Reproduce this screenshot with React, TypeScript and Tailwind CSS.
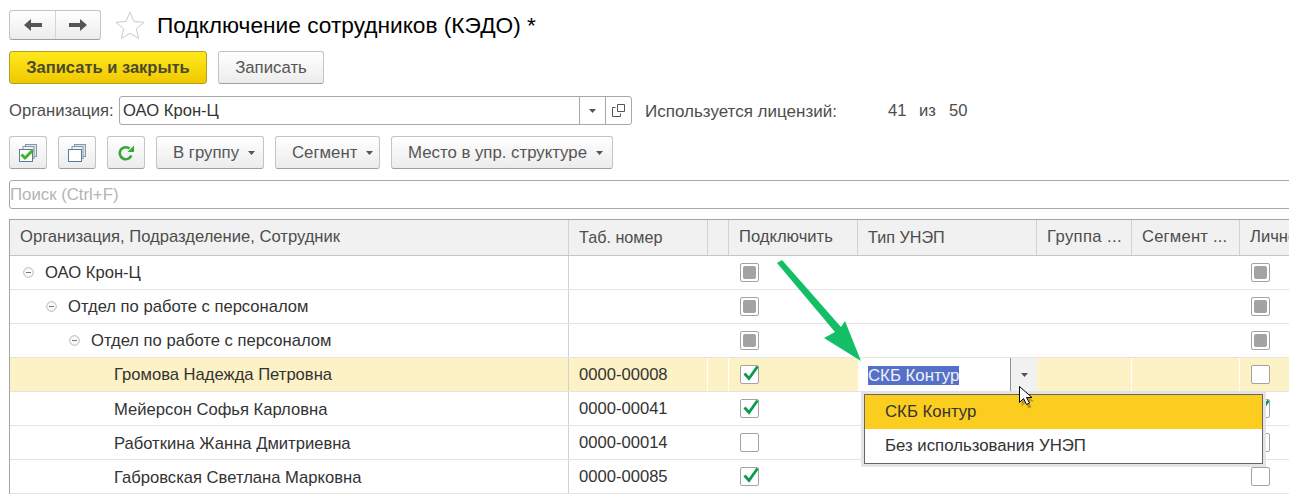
import React from "react";

type CheckState = "none" | "checked" | "mixed";

interface Row {
    name: string;
    indent: number;
    tab?: string;
    connect: CheckState;
    personal: CheckState;
    group?: boolean;
    active?: boolean;
}

const rows: Row[] = [
    { name: "ОАО Крон-Ц", indent: 35, connect: "mixed", personal: "mixed", group: true },
    { name: "Отдел по работе с персоналом", indent: 58, connect: "mixed", personal: "mixed", group: true },
    { name: "Отдел по работе с персоналом", indent: 81, connect: "mixed", personal: "mixed", group: true },
    { name: "Громова Надежда Петровна", indent: 104, tab: "0000-00008", connect: "checked", personal: "none", active: true },
    { name: "Мейерсон Софья Карловна", indent: 104, tab: "0000-00041", connect: "checked", personal: "checked" },
    { name: "Работкина Жанна Дмитриевна", indent: 104, tab: "0000-00014", connect: "none", personal: "none" },
    { name: "Габровская Светлана Марковна", indent: 104, tab: "0000-00085", connect: "checked", personal: "none" },
];

const Caret = () => (
    <svg width="7" height="4" viewBox="0 0 7 4" className="shrink-0">
        <path d="M0 0h7L3.5 4z" fill="#555" />
    </svg>
);

const Check = ({ state }: { state: CheckState }) => (
    <div className="relative h-[19px] w-[19px] rounded-[2px] border border-[#a3a3a3] bg-white p-[2px]">
        {state === "mixed" && <div className="h-full w-full rounded-[2px] bg-[#a3a3a3]" />}
        {state === "checked" && (
            <svg width="20" height="20" viewBox="0 0 20 20" className="absolute top-[-3px] left-0">
                <path d="M3.5 10.5l4.5 5L16.5 3.5" fill="none" stroke="#0a9a50" strokeWidth="2.8" />
            </svg>
        )}
    </div>
);

const Collapse = () => (
    <svg width="11" height="11" viewBox="0 0 11 11" className="shrink-0">
        <circle cx="5.5" cy="5.5" r="4.8" fill="#fafafa" stroke="#b5b5b5" />
        <path d="M3 5.5h5" stroke="#777" />
    </svg>
);

const ToolButton = ({ children, className }: { children: React.ReactNode; className: string }) => (
    <div
        className={`flex h-[33px] items-center rounded-[3px] border border-[#c4c4c4] border-b-[#9f9f9f] bg-gradient-to-b from-white to-[#ececec] text-[16.8px] text-[#555] ${className}`}
    >
        {children}
    </div>
);

const MenuButton = ({ label, width }: { label: string; width: string }) => (
    <ToolButton className={`gap-[9px] pl-[16px] ${width}`}>
        <span>{label}</span>
        <Caret />
    </ToolButton>
);

const StackIcon = ({ checked }: { checked?: boolean }) => (
    <svg width="18" height="18" viewBox="0 0 18 18">
        <rect x="6.5" y="0.5" width="11" height="12" fill="#dfe5ea" stroke="#8397a8" />
        <rect x="4" y="2.500" width="11" height="12" fill="#eef1f4" stroke="#8397a8" />
        <rect x="0.5" y="5.500" width="13" height="12" fill="white" stroke="#5d7a92" />
        {checked && <path d="M2.500 10.500l3.500 3.500L14 6" fill="none" stroke="#3fb52c" strokeWidth="3" />}
    </svg>
);

const RefreshIcon = () => (
    <svg width="18" height="18" viewBox="0 0 18 18">
        <path d="M14.3 11.5A6 6 0 1 1 12.6 4.6" fill="none" stroke="#36a83a" strokeWidth="2.6" />
        <path d="M10.5 8h6.5V1.5z" fill="#36a83a" />
    </svg>
);

const App = () => {
    return (
        <div
            className="relative h-[496px] w-[1289px] overflow-hidden bg-white pt-[10px] pl-[9px] text-[16.6px] text-[#333]"
            style={{ fontFamily: '"Liberation Sans", Arial, sans-serif' }}
        >
            <div className="flex h-[30px] items-center">
                <div className="flex h-[30px] w-[92px] rounded-[3px] border border-[#c4c4c4] border-b-[#9f9f9f] bg-gradient-to-b from-white to-[#ececec]">
                    <div className="flex w-[46px] items-center justify-center border-r border-[#d4d4d4]">
                        <svg width="18" height="12" viewBox="0 0 18 12">
                            <path d="M0 6l7-6v4h11v4H7v4z" fill="#555" />
                        </svg>
                    </div>
                    <div className="flex flex-1 items-center justify-center">
                        <svg width="18" height="12" viewBox="0 0 18 12">
                            <path d="M18 6l-7-6v4H0v4h11v4z" fill="#555" />
                        </svg>
                    </div>
                </div>
                <svg width="30" height="28" viewBox="0 0 30 28" className="ml-[14px]">
                    <path d="M15 1l4 9.5 10 .8-7.700 6.500 2.400 9.700L15 22.300 6.300 27.500l2.400-9.700L1 11.300l10-.8z" fill="white" stroke="#c3ccd4" />
                </svg>
                <h1 className="ml-[12px] text-[22.7px] leading-none font-normal text-black">Подключение сотрудников (КЭДО) *</h1>
            </div>

            <div className="mt-[11px] flex gap-[11px]">
                <div className="flex h-[33px] w-[198px] items-center justify-center rounded-[3px] border border-[#b59d2a] bg-gradient-to-b from-[#ffe81a] to-[#f0c800] text-[16.5px] font-bold text-[#4a4a2a]">
                    Записать и закрыть
                </div>
                <ToolButton className="w-[106px] justify-center">Записать</ToolButton>
            </div>

            <div className="mt-[12px] flex h-[29px] items-center">
                <span className="w-[110px] pt-[2px] text-[#4d4d4d]">Организация:</span>
                <div className="flex h-[29px] w-[513px] items-center rounded-[3px] border border-[#a8a8a8] pl-[3px]">
                    <span className="flex-1 pt-[2px]">ОАО Крон-Ц</span>
                    <div className="flex h-full w-[26px] items-center justify-center border-l border-[#a8a8a8]">
                        <Caret />
                    </div>
                    <div className="flex h-full w-[26px] items-center justify-center border-l border-[#a8a8a8]">
                        <svg width="13" height="13" viewBox="0 0 13 13">
                            <path d="M3.500 3.500h-3v9h8v-3M5.500 .5h7v7h-7z" fill="none" stroke="#555" />
                        </svg>
                    </div>
                </div>
                <span className="ml-[13px] w-[243px] pt-[2px] text-[17px] text-[#4d4d4d]">Используется лицензий:</span>
                <span className="w-[31px] pt-[2px] text-[#4d4d4d]">41</span>
                <span className="w-[30px] pt-[2px] text-[#4d4d4d]">из</span>
                <span className="pt-[2px] text-[#4d4d4d]">50</span>
            </div>

            <div className="mt-[11px] flex gap-[11px]">
                <ToolButton className="w-[38px] justify-center">
                    <StackIcon checked />
                </ToolButton>
                <ToolButton className="w-[38px] justify-center">
                    <StackIcon />
                </ToolButton>
                <ToolButton className="w-[38px] justify-center">
                    <RefreshIcon />
                </ToolButton>
                <MenuButton label="В группу" width="w-[108px]" />
                <MenuButton label="Сегмент" width="w-[105px]" />
                <MenuButton label="Место в упр. структуре" width="w-[222px]" />
            </div>

            <div className="mt-[11px] flex h-[29px] w-[1300px] items-center rounded-l-[3px] border border-[#a8a8a8] text-[16.8px] text-[#b4b4b4]">
                Поиск (Ctrl+F)
            </div>

            <div className="mt-[10px] w-[1320px] border-t border-l border-[#a3a3a3]">
                <div className="grid h-[36px] grid-cols-[559px_139px_21px_129px_179px_95px_108px_1fr] items-center border-b border-[#c4c4c4] bg-[#f1f1f1] text-[#4d4d4d]">
                    <div className="flex h-full items-center border-r border-[#d2d2d2] pl-[10px]">Организация, Подразделение, Сотрудник</div>
                    <div className="flex h-full items-center border-r border-[#d2d2d2] pl-[10px] text-[16.2px]">Таб. номер</div>
                    <div className="h-full border-r border-[#d2d2d2]" />
                    <div className="flex h-full items-center border-r border-[#d2d2d2] pl-[10px]">Подключить</div>
                    <div className="flex h-full items-center border-r border-[#d2d2d2] pl-[10px] text-[16.2px]">Тип УНЭП</div>
                    <div className="flex h-full items-center border-r border-[#d2d2d2] pl-[10px] tracking-[0.4px]">Группа ...</div>
                    <div className="flex h-full items-center border-r border-[#d2d2d2] pl-[10px] tracking-[0.2px]">Сегмент ...</div>
                    <div className="flex h-full items-center pl-[10px]">Лично</div>
                </div>
                {rows.map((row, i) => {
                    const sep = row.active ? "border-r border-white" : "";
                    return (
                        <div
                            key={i}
                            className={`grid h-[34px] grid-cols-[559px_139px_21px_129px_179px_95px_108px_1fr] items-center border-b border-[#e4e4e4] ${row.active ? "bg-[#fdf1c6]" : ""}`}
                        >
                            <div
                                className={`relative flex h-full items-center border-r border-[#d2d2d2] ${i > 3 ? "pt-[4px]" : "pt-[2px]"}`}
                                style={{ paddingLeft: row.indent }}
                            >
                                {row.group && (
                                    <span className="absolute top-[11px]" style={{ left: row.indent - 22 }}>
                                        <Collapse />
                                    </span>
                                )}
                                {row.name}
                            </div>
                            <div className={`flex h-full items-center pt-[2px] pl-[10px] ${sep}`}>{row.tab}</div>
                            <div className={`h-full ${sep}`} />
                            <div className="flex h-full items-center pl-[11px]">
                                <Check state={row.connect} />
                            </div>
                            {row.active ? (
                                <div className="flex h-full items-center bg-white pl-[10px]">
                                    <span className="flex-1 pt-[2px]">
                                        <span className="bg-[#5570c8] text-[16.8px] text-[#f2f2f2]">СКБ Контур</span>
                                    </span>
                                    <div className="flex h-full w-[27px] items-center justify-center border-l border-[#8f8f8f] bg-[#f1f1f1]">
                                        <Caret />
                                    </div>
                                </div>
                            ) : (
                                <div className="h-full" />
                            )}
                            <div className={`h-full ${sep}`} />
                            <div className={`h-full ${sep}`} />
                            <div className="flex h-full items-center pl-[11px]">
                                <Check state={row.personal} />
                            </div>
                        </div>
                    );
                })}
            </div>

            <div className="absolute top-[394px] left-[864px] w-[399px] border border-[#666] bg-white text-[16.8px] text-[#333] shadow-[0_0_0_3px_#e4e4e4]">
                <div className="flex h-[34px] items-center bg-[#fbcd1e] pl-[20px]">СКБ Контур</div>
                <div className="flex h-[34px] items-center pl-[20px]">Без использования УНЭП</div>
            </div>

            <svg width="100" height="110" viewBox="0 0 100 110" className="absolute top-[255px] left-[770px]">
                <path d="M7 8L12 5L71 72L75 66L91 106L54 83L65 77z" fill="#12bf66" />
            </svg>

            <svg width="16" height="24" viewBox="0 0 16 24" className="absolute top-[386px] left-[1019px]">
                <path d="M2.500 4.500v16l4-4 3 6 3-1.500-3-5.500h5.500z" fill="#00000040" />
                <path d="M.5 .5v16l4-4 3 6 3-1.500-3-5.500h5.500z" fill="white" stroke="black" />
            </svg>
        </div>
    );
};

export default App;
